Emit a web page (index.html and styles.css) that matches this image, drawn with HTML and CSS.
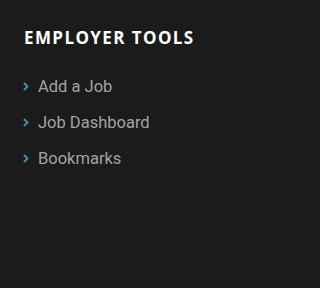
FILE: index.html
```html
<!DOCTYPE html>
<html>
<head>
<meta charset="utf-8">
<link rel="stylesheet" href="styles.css">
</head>
<body>
<div class="widget">
  <h3 class="title">EMPLOYER TOOLS</h3>
  <ul class="links">
    <li><svg class="chev" viewBox="0 0 6 9" width="6" height="9"><path d="M1 1 L4.5 4.5 L1 8" fill="none" stroke="#3a8ea6" stroke-width="2"/></svg><span>Add a Job</span></li>
    <li><svg class="chev" viewBox="0 0 6 9" width="6" height="9"><path d="M1 1 L4.5 4.5 L1 8" fill="none" stroke="#3a8ea6" stroke-width="2"/></svg><span>Job Dashboard</span></li>
    <li><svg class="chev" viewBox="0 0 6 9" width="6" height="9"><path d="M1 1 L4.5 4.5 L1 8" fill="none" stroke="#3a8ea6" stroke-width="2"/></svg><span>Bookmarks</span></li>
  </ul>
</div>
</body>
</html>
```
FILE: styles.css
```css
html, body {
  margin: 0;
  padding: 0;
  background: #1b1b1b;
}
.widget {
  padding: 28px 24px 0 24px;
}
.title {
  margin: 0;
  font-family: "Open Sans", sans-serif;
  font-weight: 700;
  font-size: 17px;
  line-height: 20px;
  color: #ffffff;
  letter-spacing: 1.4px;
}
.links {
  list-style: none;
  margin: 20px 0 0 0;
  padding: 0;
}
.links li {
  display: flex;
  align-items: center;
  height: 36px;
  font-family: Roboto, sans-serif;
  font-size: 16.5px;
  color: #a3a3a3;
}
.chev {
  margin-left: -1px;
  margin-right: 9px;
  flex: none;
}
```
